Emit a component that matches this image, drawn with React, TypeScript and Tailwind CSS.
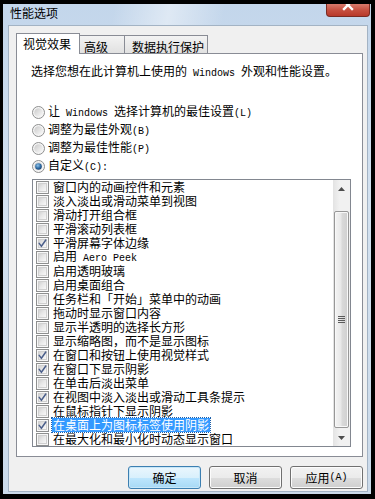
import React from "react";

function T({ s }: { s: string }) {
  const parts = s.split(/([\x20-\x7e]+)/).filter((p) => p !== "");
  return (
    <>
      {parts.map((p, i) =>
        /^[\x20-\x7e]+$/.test(p) ? (
          <span key={i} className="font-['Liberation_Mono',monospace] text-[10px] whitespace-pre">
            {p}
          </span>
        ) : (
          <React.Fragment key={i}>{p}</React.Fragment>
        )
      )}
    </>
  );
}

function CheckBox({ checked }: { checked: boolean }) {
  return (
    <span className="relative w-[13px] h-[13px] shrink-0 border border-[#8e8f8f] bg-[#f7f7f7]">
      <span className="absolute inset-[1px] border border-[#d0d0d0] bg-[linear-gradient(135deg,#d2d2d2_0%,#e7e7e7_45%,#f8f8f8_100%)]" />
      {checked && (
        <svg className="absolute -left-px -top-px" width="13" height="13" viewBox="0 0 13 13">
          <path d="M3.2 6.4 L5.4 9.2 L9.8 3" stroke="#4a5e8a" strokeWidth="1.5" fill="none" strokeLinecap="round" />
        </svg>
      )}
    </span>
  );
}

function Radio({ on, id }: { on?: boolean; id: string }) {
  return (
    <svg width="13" height="13" viewBox="0 0 13 13" className="shrink-0">
      <defs>
        <linearGradient id={`g${id}`} x1="0" y1="0" x2="1" y2="1">
          <stop offset="0" stopColor="#c9c9c9" />
          <stop offset="1" stopColor="#fbfbfb" />
        </linearGradient>
        <radialGradient id={`d${id}`} cx="0.4" cy="0.35" r="0.7">
          <stop offset="0" stopColor="#8fc3ea" />
          <stop offset="0.6" stopColor="#2d6aa3" />
          <stop offset="1" stopColor="#1b3f6b" />
        </radialGradient>
      </defs>
      <circle cx="6.5" cy="6.5" r="6" fill="#f5f5f5" stroke="#8e8f8f" strokeWidth="1" />
      <circle cx="6.5" cy="6.5" r="4.3" fill={`url(#g${id})`} />
      {on && <circle cx="6.5" cy="6.5" r="3.3" fill={`url(#d${id})`} />}
    </svg>
  );
}

const items: { t: string; c: boolean; sel?: boolean }[] = [
  { t: "窗口内的动画控件和元素", c: false },
  { t: "淡入淡出或滑动菜单到视图", c: false },
  { t: "滑动打开组合框", c: false },
  { t: "平滑滚动列表框", c: false },
  { t: "平滑屏幕字体边缘", c: true },
  { t: "启用 Aero Peek", c: false },
  { t: "启用透明玻璃", c: false },
  { t: "启用桌面组合", c: false },
  { t: "任务栏和「开始」菜单中的动画", c: false },
  { t: "拖动时显示窗口内容", c: false },
  { t: "显示半透明的选择长方形", c: false },
  { t: "显示缩略图，而不是显示图标", c: false },
  { t: "在窗口和按钮上使用视觉样式", c: true },
  { t: "在窗口下显示阴影", c: true },
  { t: "在单击后淡出菜单", c: false },
  { t: "在视图中淡入淡出或滑动工具条提示", c: true },
  { t: "在鼠标指针下显示阴影", c: false },
  { t: "在桌面上为图标标签使用阴影", c: true, sel: true },
  { t: "在最大化和最小化时动态显示窗口", c: false },
];

function Btn({ label, def }: { label: string; def?: boolean }) {
  return (
    <div
      className={
        "w-[73px] h-[23px] rounded-[3px] border flex items-center justify-center text-[12px] leading-[14px] text-black " +
        (def
          ? "border-[#3c7fb1] bg-[linear-gradient(to_bottom,#eaf6fd_0%,#d9f0fc_50%,#bee6fd_51%,#a7d9f5_100%)] shadow-[inset_0_0_0_1px_#c7e7f8]"
          : "border-[#707070] bg-[linear-gradient(to_bottom,#f2f2f2_0%,#ebebeb_50%,#dddddd_51%,#cfcfcf_100%)] shadow-[inset_0_0_0_1px_#fcfcfc]")
      }
    >
      <T s={label} />
    </div>
  );
}

export default function App() {
  return (
    <div className="w-[375px] h-[499px] bg-black pt-[4px] pl-[3px] overflow-hidden font-['Noto_Sans_CJK_SC',sans-serif]">
      <div className="relative w-[368px] h-[490px] flex flex-col bg-[linear-gradient(to_bottom,#c3d6eb_0%,#d3e1f0_40%,#cbdaea_100%)]">
        {/* title bar */}
        <div className="relative h-[21px] shrink-0 pl-[7px] pt-[1px] text-[12px] leading-[16px] text-black bg-[linear-gradient(100deg,rgba(255,255,255,0)_30%,rgba(255,255,255,0.45)_45%,rgba(255,255,255,0)_60%)]">
          性能选项
          <div className="absolute top-0 right-[1px] w-[44px] h-[13px] rounded-b-[4px] border border-t-0 border-[#7a2a22] bg-[linear-gradient(to_bottom,#d77a6c_0%,#c65040_50%,#b8392a_100%)] overflow-hidden flex justify-center">
            <svg width="12" height="12" viewBox="0 0 12 12" className="-mt-[5px]">
              <path d="M2 2 L10 10 M10 2 L2 10" stroke="#ffffff" strokeWidth="2.4" strokeLinecap="square" />
            </svg>
          </div>
        </div>
        {/* body */}
        <div className="ml-[5px] mr-[3px] flex-1 border border-[#a3b3c4] bg-[#f0f0f0] pt-[7px] pl-[7px] pr-[3px] flex flex-col">
          {/* tabs */}
          <div className="flex items-end h-[21px] -mb-px text-[12px] leading-[14px] text-black">
            <div className="relative z-10 w-[64px] h-[21px] border border-b-0 border-[#898c95] bg-white pl-[6px] pt-[3px]">
              视觉效果
            </div>
            <div className="-ml-px w-[46px] h-[19px] border border-[#898c95] bg-[linear-gradient(to_bottom,#f3f3f3,#e1e1e1)] pl-[4px] pt-[4px]">
              高级
            </div>
            <div className="-ml-px w-[84px] h-[19px] border border-[#898c95] bg-[linear-gradient(to_bottom,#f3f3f3,#e1e1e1)] pl-[7px] pt-[4px]">
              数据执行保护
            </div>
          </div>
          {/* panel */}
          <div className="w-[347px] h-[404px] border border-[#898c95] bg-white pl-[15px] pt-[10px] text-[12px] leading-[14px] text-black">
            <div className="-ml-px">
              <T s="选择您想在此计算机上使用的 Windows 外观和性能设置。" />
            </div>
            <div className="mt-[22px] flex flex-col">
              {[
                ["让 Windows 选择计算机的最佳设置(L)", false],
                ["调整为最佳外观(B)", false],
                ["调整为最佳性能(P)", false],
                ["自定义(C):", true],
              ].map(([label, on], i) => (
                <div key={i} className="h-[18px] flex items-center gap-[2px]">
                  <Radio id={`r${i}`} on={on as boolean} />
                  <span className="ml-[1px]">
                    <T s={label as string} />
                  </span>
                </div>
              ))}
            </div>
            {/* list */}
            <div className="mt-[4px] w-[319px] h-[268px] border border-[#828790] bg-white flex">
              <div className="flex-1 flex flex-col pl-[3px]">
                {items.map((it, i) => (
                  <div key={i} className="h-[14px] flex items-center gap-[4px]">
                    <CheckBox checked={it.c} />
                    <span
                      className={
                        "whitespace-nowrap leading-[14px] " +
                        (it.sel ? "bg-[#3399ff] text-white outline outline-1 outline-dotted outline-[#1d5fa8] -ml-px px-px" : "")
                      }
                    >
                      <T s={it.t} />
                    </span>
                  </div>
                ))}
              </div>
              {/* scrollbar */}
              <div className="w-[17px] flex flex-col bg-[linear-gradient(to_right,#e3e3e3,#f1f1f1_40%,#f1f1f1)]">
                <div className="h-[17px] flex items-center justify-center">
                  <svg width="7" height="4" viewBox="0 0 7 4">
                    <path d="M0 4 L3.5 0 L7 4 Z" fill="#4d4d4d" />
                  </svg>
                </div>
                <div className="h-[14px]" />
                <div className="h-[217px] mx-px rounded-[2px] border border-[#979797] bg-[linear-gradient(to_right,#f4f4f4,#e8e8e8_45%,#d9d9d9_55%,#cfcfcf)] shadow-[inset_0_0_0_1px_#f8f8f8] flex flex-col items-center justify-center gap-[1px]">
                  <div className="w-[7px] h-px bg-[#5b5b5b]" />
                  <div className="w-[7px] h-px bg-[#5b5b5b]" />
                  <div className="w-[7px] h-px bg-[#5b5b5b]" />
                  <div className="w-[7px] h-px bg-[#5b5b5b]" />
                </div>
                <div className="h-px" />
                <div className="h-[17px] flex items-center justify-center">
                  <svg width="7" height="4" viewBox="0 0 7 4">
                    <path d="M0 0 L3.5 4 L7 0 Z" fill="#4d4d4d" />
                  </svg>
                </div>
              </div>
            </div>
          </div>
          {/* buttons */}
          <div className="mt-[9px] w-[347px] flex justify-end gap-[8px]">
            <Btn label="确定" def />
            <Btn label="取消" />
            <Btn label="应用(A)" />
          </div>
        </div>
        <div className="h-[2px] shrink-0" />
      </div>
    </div>
  );
}
